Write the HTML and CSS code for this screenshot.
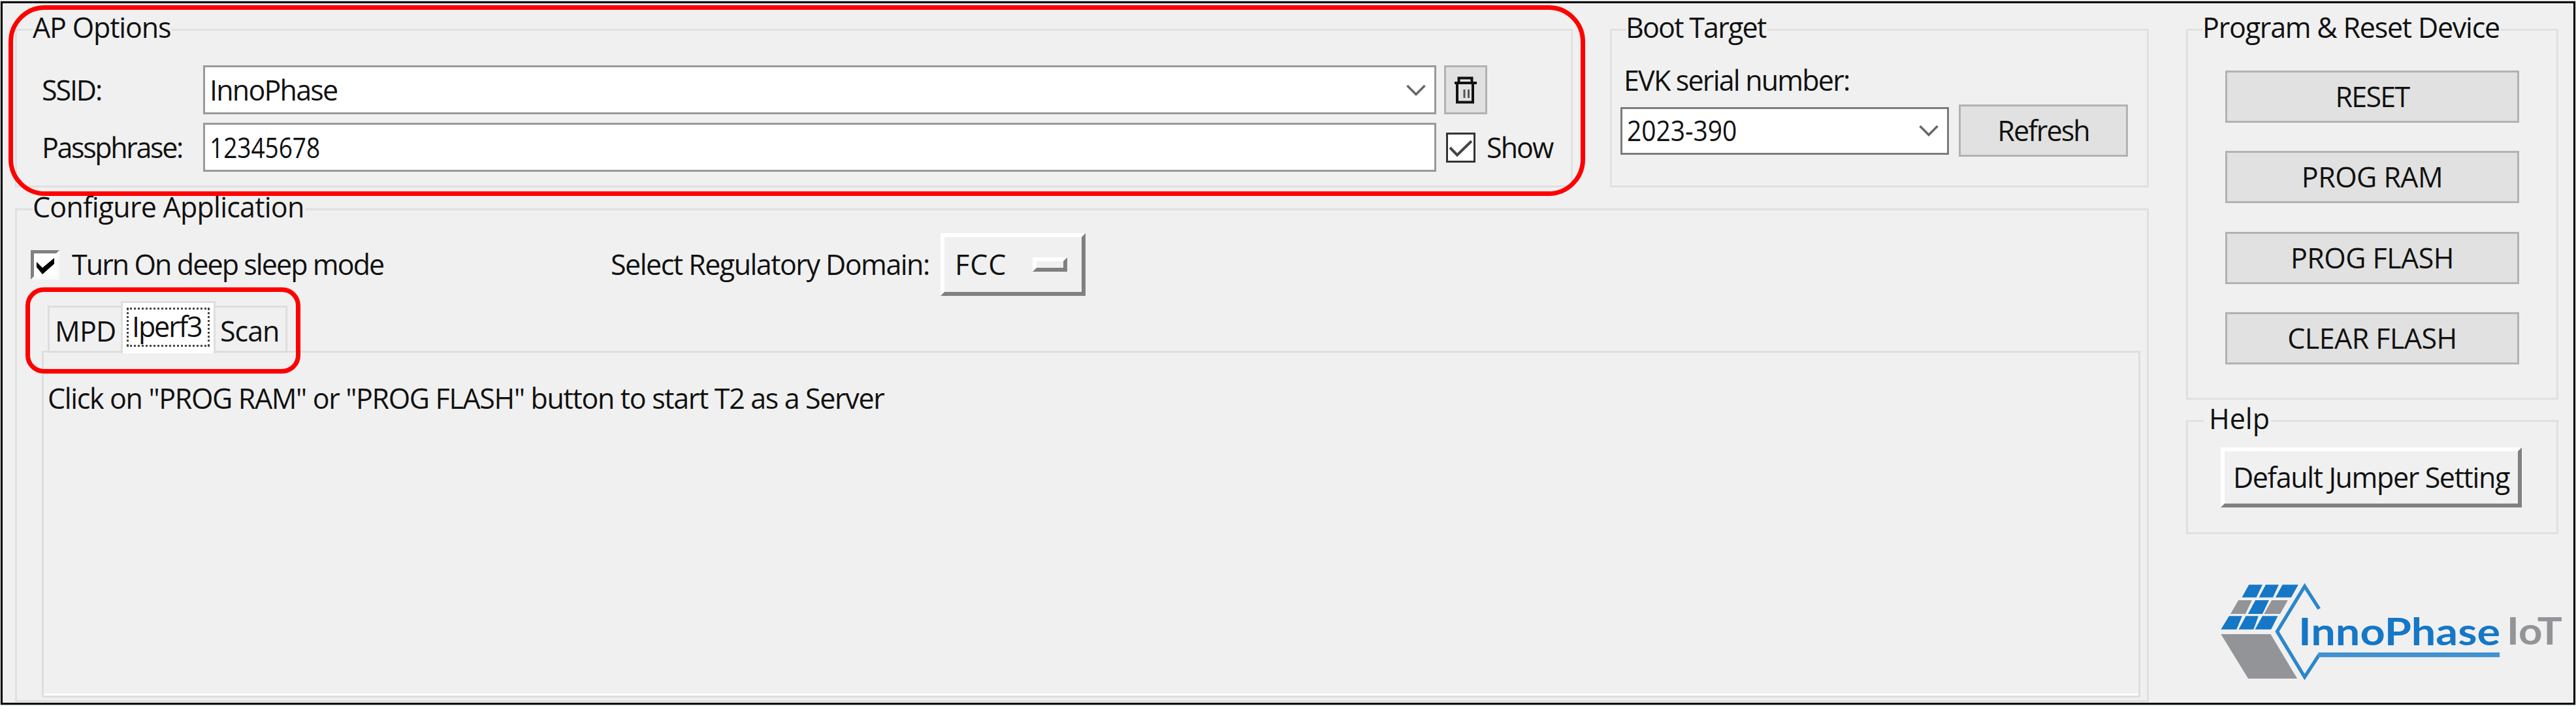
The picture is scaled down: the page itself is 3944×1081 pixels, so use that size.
FILE: index.html
```html
<!DOCTYPE html>
<html lang="en">
<head>
<meta charset="utf-8">
<title>InnoPhase IoT</title>
<link rel="stylesheet" href="styles.css">
</head>
<body>
<div class="window">
  <div class="left">
    <div class="top-row">
      <section class="group ap">
        <h2 class="legend">AP Options</h2>
        <div class="ap-grid">
          <span class="ssid">SSID:</span>
          <div class="field"><span class="name">InnoPhase</span>
            <svg class="chevron" width="30" height="18" viewBox="0 0 30 18"><path d="M1.500 2 15 15.500 28.500 2"/></svg>
          </div>
          <button class="btn trash" aria-label="Delete">
            <svg width="36" height="42" viewBox="0 0 36 42"><path d="M1 10h34M5 10v29.500h24V10M7.500 10V2.500h20V10"/><path class="bars" d="M16 20v13M22.500 20v13"/></svg>
          </button>
          <span class="pass">Passphrase:</span>
          <div class="field"><span class="digits">12345678</span></div>
          <label class="show"><svg width="45" height="46" viewBox="0 0 45 46"><rect x="1.500" y="1.500" width="42" height="43"/><path d="M6 23 17 34.500 39 13"/></svg><span>Show</span></label>
        </div>
      </section>
      <section class="group boot">
        <h2 class="legend">Boot Target</h2>
        <div class="evk">EVK serial number:</div>
        <div class="boot-row">
          <div class="field dark"><span class="digits serial">2023-390</span>
            <svg class="chevron" width="30" height="18" viewBox="0 0 30 18"><path d="M1.500 2 15 15.500 28.500 2"/></svg>
          </div>
          <button class="btn refresh">Refresh</button>
        </div>
      </section>
    </div>
    <section class="group config">
      <h2 class="legend">Configure Application</h2>
      <div class="config-row">
        <label class="sleep"><span class="classic-check"><svg width="28" height="26" viewBox="0 0 28 26"><path d="M0 6 9 15 27 0V9L9 25 0 14Z"/></svg></span><span>Turn On deep sleep mode</span></label>
        <span class="domain">Select Regulatory Domain:</span>
        <button class="raised fcc"><span>FCC</span><i class="indicator"></i></button>
      </div>
      <div class="tabs">
        <div class="tab mpd">MPD</div>
        <div class="tab active"><span class="focus">Iperf3</span></div>
        <div class="tab scan">Scan</div>
      </div>
      <div class="panel">Click on "PROG RAM" or "PROG FLASH" button to start T2 as a Server</div>
    </section>
  </div>
  <div class="right">
    <section class="group program">
      <h2 class="legend">Program &amp; Reset Device</h2>
      <div class="actions">
        <button class="btn reset">RESET</button>
        <button class="btn">PROG RAM</button>
        <button class="btn">PROG FLASH</button>
        <button class="btn">CLEAR FLASH</button>
      </div>
    </section>
    <section class="group help">
      <h2 class="legend">Help</h2>
      <button class="raised jumper">Default Jumper Setting</button>
    </section>
    <svg class="logo" width="560" height="190" viewBox="0 0 560 190">
      <g transform="scale(.35714 .33333)">
        <path class="blue" d="M177 76h58l-26 58h-62zM249 76h56l-25 58h-60zM321 76h68l-31 58h-67zM205 147h58l-28 63h-62zM92 220h56l-24 61H57zM164 220h54l-21 61h-64zM235 220h66l-29 61h-69z"/>
        <path class="gray" d="M132 147h58l-28 63H98zM275 147h69l-33 63h-69zM57 303h213L384 507H174z"/>
        <path class="line" d="M478 187 416 83 298 291 416 500 478 398"/>
        <path class="bar" d="M474 398H1252"/>
      </g>
      <text class="brand" x="139" y="118" textLength="309" lengthAdjust="spacingAndGlyphs">InnoPhase</text>
      <text class="iot" x="458" y="117" textLength="85" lengthAdjust="spacingAndGlyphs">IoT</text>
    </svg>
  </div>
  <div class="mark mark-ap"></div>
  <div class="mark mark-tabs"></div>
</div>
</body>
</html>
```
FILE: styles.css
```css
* { box-sizing: border-box; }
body {
  margin: 0;
  width: 3944px;
  height: 1081px;
  overflow: hidden;
  background: #e4e9e6;
  font: 43px/48px "Open Sans", "Noto Sans", sans-serif;
  color: #111;
}
button { font: inherit; color: inherit; padding: 0; margin: 0; white-space: nowrap; }
svg { display: block; flex: none; fill: none; }
.window {
  position: relative;
  display: flex;
  gap: 57px;
  width: 3942px;
  height: 1077px;
  margin: 2px 1px;
  padding: 39px 0 0 19px;
  border: 3px solid #000;
  background: #f0f0f0;
  white-space: nowrap;
}
.left { width: 3267px; }
.right { width: 570px; }
.top-row { display: flex; gap: 57px; height: 243px; }
.group { border: 3px solid #e0e0e0; }
.legend {
  width: max-content;
  height: 48px;
  margin: -30px 0 0 24px;
  padding: 1px 2px 0 0;
  font-size: inherit;
  font-weight: 400;
  letter-spacing: -1.160px;
  background: #f0f0f0;
}

/* Access point options */
.ap { width: 2385px; }
.ap-grid {
  display: grid;
  grid-template-columns: 247px 1888px max-content;
  grid-auto-rows: 75px;
  row-gap: 13px;
  align-items: center;
  margin: 35px 0 0 38px;
}
.ssid { letter-spacing: -2.100px; }
.pass { letter-spacing: -2.350px; }
.name { letter-spacing: -1.780px; }
.digits { transform: scaleX(.86); transform-origin: 0 50%; }
.serial { transform: scaleX(.905); }
.field {
  display: flex;
  align-items: center;
  justify-content: space-between;
  height: 75px;
  padding: 0 13px 0 7px;
  border: 3px solid #999;
  background: #fff;
}
.field.dark { width: 503px; height: 73px; border-color: #7c7c7c; }
.chevron { stroke: #666; stroke-width: 3.5; }
.btn {
  display: flex;
  align-items: center;
  justify-content: center;
  height: 80px;
  border: 3px solid #b2b2b2;
  background: #e1e1e1;
  letter-spacing: -.550px;
}
.btn.trash { width: 66px; height: 75px; margin-left: 12px; }
.trash svg { stroke: #111; stroke-width: 4; }
.trash .bars { stroke: #555; stroke-width: 3; }
.show { display: flex; align-items: center; gap: 17px; margin-left: 15px; letter-spacing: -1.940px; }
.show rect { fill: #fff; stroke: #333; stroke-width: 3; }
.show path { stroke: #444; stroke-width: 4; }

/* Boot target */
.boot { width: 825px; }
.boot .legend { margin-left: 21px; letter-spacing: -1.770px; }
.evk { margin: 34px 0 13px 18px; letter-spacing: -1.800px; }
.boot-row { display: flex; align-items: center; gap: 15px; margin-left: 13px; }
.btn.refresh { width: 259px; letter-spacing: -1.890px; }

/* Application configuration */
.config { height: 756px; margin-top: 32px; }
.config .legend { letter-spacing: -.770px; }
.config-row { display: flex; align-items: center; height: 96px; margin: 17px 0 8px 21px; }
.sleep { display: flex; align-items: center; gap: 19px; width: 888px; letter-spacing: -1.920px; }
.classic-check {
  display: flex;
  width: 44px;
  height: 45px;
  padding: 7px 0 0 4px;
  border: 5px solid;
  border-color: #808080 #fafafa #fafafa #808080;
  background: #fff;
}
.classic-check path { fill: #000; }
.domain { width: 505px; letter-spacing: -1.520px; }
.raised {
  display: flex;
  align-items: center;
  border: 6px solid;
  border-color: #fff #808080 #808080 #fff;
  background: #f0f0f0;
}
.fcc { width: 222px; height: 96px; padding: 0 22px 0 16px; justify-content: space-between; letter-spacing: 1px; }
.indicator {
  width: 53px;
  height: 22px;
  border: 6px solid;
  border-color: #fff #808080 #808080 #fff;
}
.tabs { display: flex; align-items: flex-end; height: 76px; margin-left: 47px; }
.tab {
  height: 69px;
  padding-top: 12px;
  border: 3px solid #dedede;
  border-bottom: 0;
}
.mpd { width: 112px; padding-left: 8px; border-right: 0; letter-spacing: -.770px; }
.scan { width: 110px; padding-left: 7px; border-left: 0; letter-spacing: -1.020px; }
.tab.active {
  position: relative;
  width: 145px;
  height: 80px;
  margin-bottom: -4px;
  padding: 7px 0 0 6px;
  background: #fff;
}
.focus {
  display: block;
  width: 127px;
  height: 60px;
  padding: 2px 0 0 5px;
  border: 3px dotted #444;
  letter-spacing: -2.100px;
}
.panel {
  height: 531px;
  margin: 0 10px 0 38px;
  padding: 46px 0 0 6px;
  border: 3px solid #dedede;
  box-shadow: inset 0 -3px #fff;
  letter-spacing: -1.350px;
}

/* Device actions */
.program { height: 568px; }
.program .legend { margin-left: 22px; letter-spacing: -1.220px; }
.actions { display: grid; gap: 43.300px; width: 450px; margin: 43px 0 0 57px; }
.reset { letter-spacing: -1.730px; }
.help { height: 175px; margin-top: 31px; }
.help .legend { padding-left: 8px; letter-spacing: 0; }
.jumper { justify-content: center; width: 461px; height: 92px; margin: 21px 0 0 50px; letter-spacing: -1.380px; }

/* Brand */
.logo { margin: 52px 0 0 33px; }
.blue { fill: #1577c6; }
.gray { fill: #929498; }
.line { stroke: #2b86cb; stroke-width: 15; }
.bar { stroke: #4292d0; stroke-width: 22; }
.logo text { font-family: Lato, "Open Sans", sans-serif; font-size: 58px; font-weight: 700; }
.brand { fill: #1577c6; }
.iot { fill: #929498; }

/* Red highlight frames over the form */
.mark { position: absolute; border: 7px solid #f00; }
.mark-ap { left: 9px; top: 3px; width: 2414px; height: 292px; border-radius: 56px; }
.mark-tabs { left: 35px; top: 435px; width: 421px; height: 132px; border-radius: 28px; }
```
